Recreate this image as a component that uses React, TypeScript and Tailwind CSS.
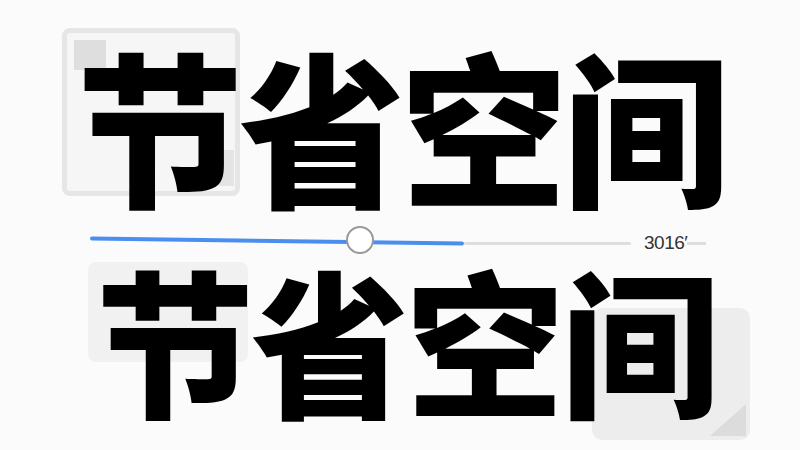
export default function App() {
  return (
    <div className="relative w-[800px] h-[450px] overflow-hidden bg-[#fbfbfb]" style={{ fontFamily: '"Noto Sans CJK SC", "Noto Sans", sans-serif' }}>
      {/* faint background cards behind the text */}
      <div className="absolute left-[62px] top-[28px] w-[178px] h-[168px] rounded-[8px] border-[5px] border-[#e6e6e6] bg-[#f6f6f6]" />
      <div className="absolute left-[74px] top-[40px] w-[32px] h-[30px] bg-[#dedede]" />
      <div className="absolute left-[200px] top-[150px] w-[34px] h-[36px] bg-[#e4e4e4]" />
      <div className="absolute left-[88px] top-[262px] w-[160px] h-[100px] rounded-[8px] bg-[#f1f1f1]" />
      <div className="absolute left-[592px] top-[308px] w-[158px] h-[132px] rounded-[10px] bg-[#ededed]" />
      <div className="absolute left-[710px] top-[404px] w-0 h-0 border-l-[36px] border-l-transparent border-b-[32px] border-b-[#dcdcdc]" />

      <div className="relative flex flex-col items-center">
        <div className="mt-[28px] h-[190px] flex items-center text-[166px] leading-none font-black text-black tracking-[-4px] pl-[2px]">
          节省空间
        </div>

        <div className="mt-[8px] w-[640px] h-[30px] flex items-center pl-[10px]">
          <div className="relative w-[541px] flex items-center">
            <div className="w-[374px] h-[4px] rounded-full bg-[#4a8ff0] rotate-[0.8deg]" />
            <div className="flex-1 h-[3px] mt-[4px] rounded-full bg-[#dedede]" />
            <div className="absolute left-[256px] top-[-12px] w-[28px] h-[28px] rounded-full bg-white border-2 border-[#9a9a9a]" />
          </div>
          <div className="ml-[13px] mt-[2px] text-[19px] leading-none text-[#333] tracking-[-0.5px]" style={{ fontFamily: '"Liberation Sans", sans-serif' }}>
            3016′
          </div>
          <div className="w-[19px] h-[3px] mt-[4px] bg-[#dedede]" />
        </div>

        <div className="mt-[2px] h-[160px] flex items-center text-[158px] leading-none font-black text-black tracking-[-3px] pl-[12px]">
          节省空间
        </div>
      </div>
    </div>
  );
}
